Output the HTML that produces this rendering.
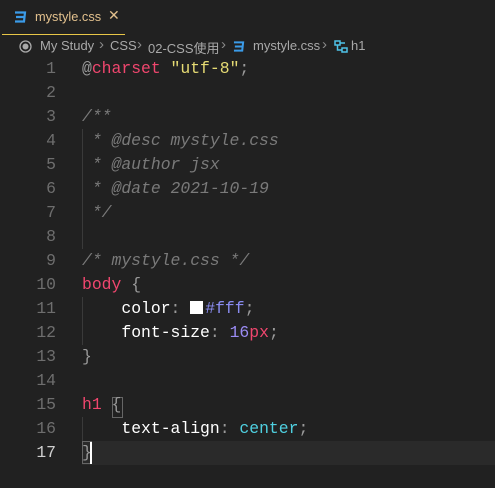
<!DOCTYPE html>
<html><head><meta charset="utf-8"><style>
body{margin:0;width:495px;height:488px;background:#212121;overflow:hidden;font-family:"Liberation Sans","Noto Sans CJK SC",sans-serif;position:relative}
.tab{position:absolute;left:2px;top:0;width:123px;height:34px;border-bottom:1px solid #e7c547}
.tab .n{position:absolute;left:33px;top:9px;color:#e2c08d;font-size:12.8px}
.tab .x{position:absolute;left:106px;top:7px;color:#e2c08d;font-size:14px}
.bc{position:absolute;top:38px;left:0;font-size:13px;color:#a9a9a9;white-space:nowrap;width:495px;height:18px}
.bc span,.bc svg{position:absolute;top:0}
.bc .ch{color:#8a8a8a;font-size:15px;top:-2px}
.ln{position:absolute;left:0;width:56px;text-align:right;color:#6e6e6e;font-family:"Liberation Mono",monospace;font-size:16.4px}
.code{position:absolute;left:82px;font-family:"Liberation Mono",monospace;font-size:16.4px;white-space:pre;color:#d4d4d4}
.c{color:#7a7a7a;font-style:italic}.k{color:#f0466e}.s{color:#e6db74}.p{color:#ffffff}.num{color:#9b8cf5}.v{color:#8a8cf0}.cy{color:#4fd0e0}.g{color:#9a9a9a}
.guide{position:absolute;left:82px;width:1px;background:#3a3a3a}
</style></head><body>
<div class="tab">
<svg style="position:absolute;left:12px;top:11px" width="13" height="12" viewBox="0 0 13 12"><path d="M1 1.5H11L10 10.5H1M2 6H10" stroke="#3b9be8" stroke-width="2.2" fill="none"/></svg>
<span class="n">mystyle.css</span><span class="x">✕</span></div>
<div class="bc">
<svg style="left:19px;top:2px" width="13" height="13"><circle cx="6.5" cy="6.5" r="5.5" stroke="#a9a9a9" stroke-width="1.3" fill="none"/><circle cx="6.5" cy="6.5" r="3" fill="#a9a9a9"/></svg>
<span style="left:40px">My Study</span><span class="ch" style="left:99px">›</span><span style="left:110px">CSS</span><span class="ch" style="left:137px">›</span><span style="left:148px">02-CSS使用</span><span class="ch" style="left:221px">›</span>
<svg style="left:233px;top:3px" width="12" height="11" viewBox="0 0 13 12"><path d="M1 1.5H11L10 10.5H1M2 6H10" stroke="#3b9be8" stroke-width="2.2" fill="none"/></svg>
<span style="left:253px">mystyle.css</span><span class="ch" style="left:322px">›</span><svg style="left:333px;top:1px" width="16" height="15"><path d="M2 2h5v4H2zM9 9h5v4H9zM4.5 6v5h4.5M7 4h5" stroke="#4fc3e8" stroke-width="1.5" fill="none"/></svg><span style="left:351px">h1</span></div>
<div style="position:absolute;left:82px;top:441px;width:413px;height:24px;background:#2a2a2a"></div>
<div class="guide" style="top:129px;height:120px"></div>
<div class="guide" style="top:297px;height:48px"></div>
<div class="guide" style="top:417px;height:24px"></div>
<div style="position:absolute;left:82px;top:441px;width:10px;height:23px;border:1px solid #666;box-sizing:border-box"></div>
<div style="position:absolute;left:90px;top:442px;width:2px;height:22px;background:#fff"></div>
<div style="position:absolute;left:112px;top:397px;width:9px;height:19px;border:1px solid #666"></div>
<div id="codes"></div>
<script>
var L=['<span class="g">@</span><span class="k">charset</span> <span class="s">"utf-8"</span><span class="g">;</span>','','<span class="c">/**</span>','<span class="c"> * @desc mystyle.css</span>','<span class="c"> * @author jsx</span>','<span class="c"> * @date 2021-10-19</span>','<span class="c"> */</span>','','<span class="c">/* mystyle.css */</span>','<span class="k">body</span> <span class="g">{</span>','    <span class="p">color</span><span class="g">:</span> <span style="display:inline-block;width:13px;height:13px;background:#fff;vertical-align:-1px;margin-right:2px"></span><span class="v">#fff</span><span class="g">;</span>','    <span class="p">font-size</span><span class="g">:</span> <span class="num">16</span><span class="k">px</span><span class="g">;</span>','<span class="g">}</span>','','<span class="k">h1</span> <span class="g">{</span>','    <span class="p">text-align</span><span class="g">:</span> <span class="cy">center</span><span class="g">;</span>','<span class="g">}</span>'];
var h='';for(var i=0;i<17;i++){var t=59+i*24;h+='<div class="ln" style="top:'+t+'px;'+(i==16?'color:#d0d0d0':'')+'">'+(i+1)+'</div><div class="code" style="top:'+t+'px">'+L[i]+'</div>';}
document.getElementById('codes').innerHTML=h;
</script>
</body></html>
